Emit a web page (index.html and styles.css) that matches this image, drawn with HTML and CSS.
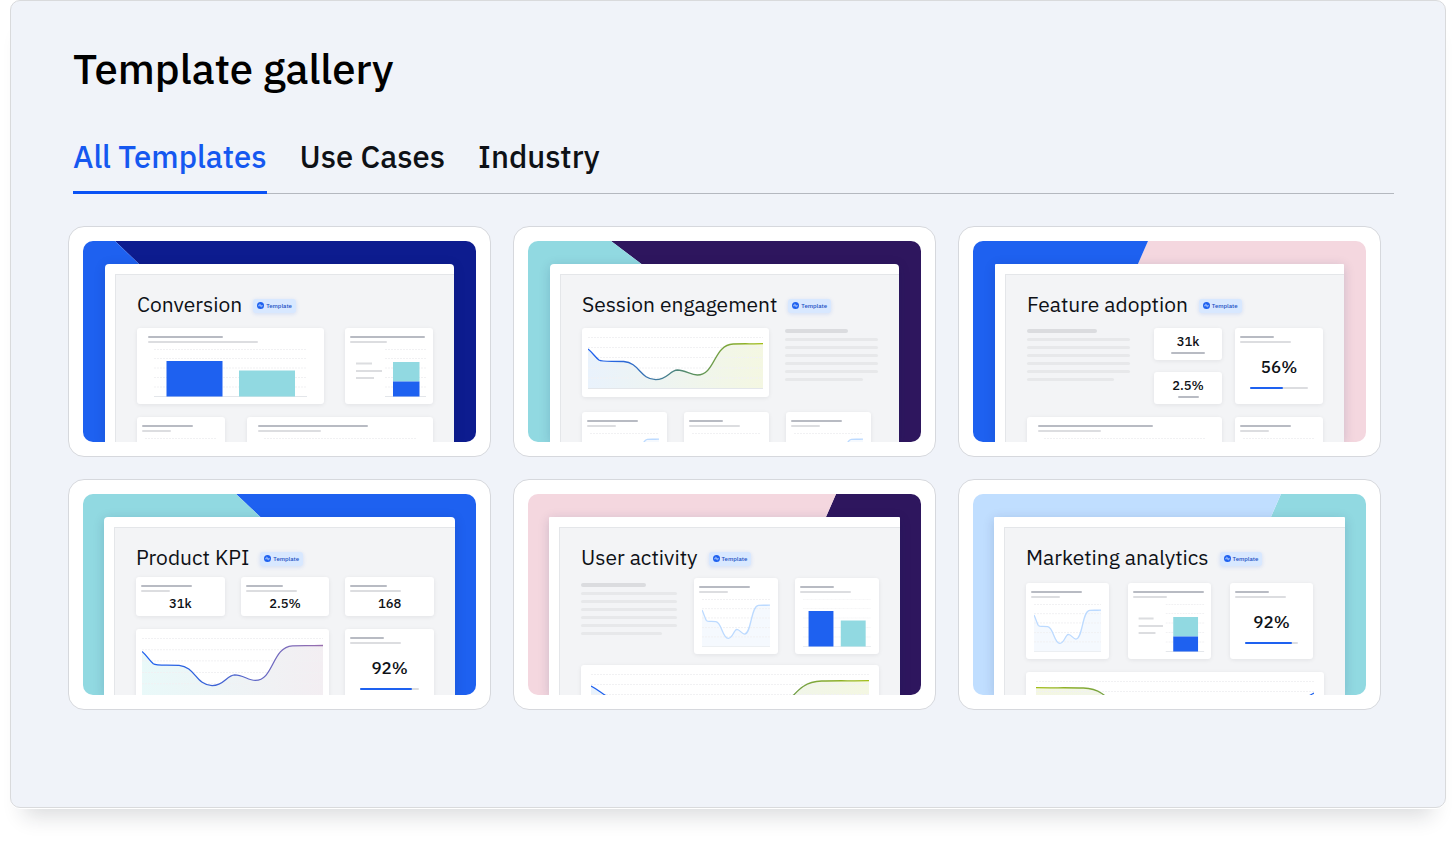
FILE: index.html
```html
<!DOCTYPE html>
<html lang="en">
<head>
  <meta charset="UTF-8">
  <meta name="viewport" content="width=device-width, initial-scale=1.0">
  <title>Template gallery</title>
  <link rel="stylesheet" href="styles.css">
</head>
<body>
  <!-- Shared chart shapes -->
  <svg class="defs" aria-hidden="true">
    <defs>
      <linearGradient id="lime-line">
        <stop offset="0" stop-color="#1e61f0"/>
        <stop offset="0.2" stop-color="#2b67d8"/>
        <stop offset="0.6" stop-color="#5a9060"/>
        <stop offset="1" stop-color="#a2bd14"/>
      </linearGradient>
      <linearGradient id="lime-fill">
        <stop offset="0" stop-color="#e9f2fc"/>
        <stop offset="1" stop-color="#f4f7e2"/>
      </linearGradient>
      <linearGradient id="plum-line">
        <stop offset="0" stop-color="#1e61f0"/>
        <stop offset="0.3" stop-color="#2f62dc"/>
        <stop offset="1" stop-color="#9a6fae"/>
      </linearGradient>
      <linearGradient id="plum-fill">
        <stop offset="0" stop-color="#e9f9f9"/>
        <stop offset="1" stop-color="#f3eef2"/>
      </linearGradient>
      <path id="grid-wide" d="M0 .5H176M0 10.5H176M0 20.5H176M0 31H176M0 41H176"/>
      <path id="curve" d="M0 12C5 16 7 20 11 23C14 25 22 24 36 24.5C52 26 52 42 68 42.7C80 42.5 82 33.5 90 33C98 33 103 38 110 38C128 38 126 8 146 7C156 6.5 165 7 176 6.7"/>
      <path id="area" d="M0 12C5 16 7 20 11 23C14 25 22 24 36 24.5C52 26 52 42 68 42.7C80 42.5 82 33.5 90 33C98 33 103 38 110 38C128 38 126 8 146 7C156 6.5 165 7 176 6.7V51.5H0Z"/>
      <symbol id="mark" viewBox="0 0 14 14">
        <circle cx="7" cy="7" r="7" fill="#1e61f0"/>
        <path d="M3 7.500H11M4 7.500C5 2.500 6.300 2.500 7.200 7S9 11.300 9.800 7.500" fill="none" stroke="#d8e8ff" stroke-width="1" stroke-linecap="round"/>
      </symbol>
      <symbol id="bars" viewBox="0 0 153 48" preserveAspectRatio="none">
        <path class="grid" d="M0 .5H153M0 9.500H153M0 19H153M0 28.500H153M0 38H153"/>
        <path class="base" d="M0 47.500H153"/>
        <rect x="12.500" y="12" width="56" height="35.500" fill="#1e61f0"/>
        <rect x="85" y="21.500" width="56" height="26" fill="#91d9e1"/>
      </symbol>
      <symbol id="stack" viewBox="0 0 78 48" preserveAspectRatio="none">
        <path class="grid" d="M35 .5H76M35 9.500H76M35 19H76M35 28.500H76M35 38H76"/>
        <path class="base" d="M35 47.500H76"/>
        <path d="M6 14.500h16M6 22h26M6 29h18" fill="none" stroke="#dcdde0" stroke-width="2"/>
        <rect x="43" y="13" width="26.500" height="19.500" fill="#91d9e1"/>
        <rect x="43" y="32.500" width="26.500" height="15" fill="#1e61f0"/>
      </symbol>
      <symbol id="spark" viewBox="0 0 176 52" preserveAspectRatio="none">
        <use href="#area" fill="#f5f9fe"/>
        <use href="#grid-wide" class="grid"/>
        <path class="base" d="M0 51.500H176"/>
        <use href="#curve" class="curve" stroke="#bcdaff"/>
      </symbol>
      <symbol id="empty" viewBox="0 0 176 52" preserveAspectRatio="none">
        <use href="#grid-wide" class="grid"/>
      </symbol>
    </defs>
  </svg>

  <main class="shell">
    <h1>Template gallery</h1>

    <nav class="tabs">
      <a class="tab active" href="#all">All Templates</a>
      <a class="tab" href="#use-cases">Use Cases</a>
      <a class="tab" href="#industry">Industry</a>
    </nav>

    <section class="gallery">
      <!-- Conversion -->
      <a class="card" href="#conversion">
        <div class="preview conversion">
          <div class="frame">
            <div class="panel">
              <div class="head">
                <h2>Conversion</h2>
                <span class="badge"><svg><use href="#mark"/></svg>Template</span>
              </div>
              <div class="row wide-narrow">
                <div class="widget roomy">
                  <span class="line w75"></span><span class="line light w110"></span>
                  <svg class="chart"><use href="#bars"/></svg>
                </div>
                <div class="widget">
                  <span class="line w75"></span><span class="line light w37"></span>
                  <svg class="chart flush"><use href="#stack"/></svg>
                </div>
              </div>
              <div class="row narrow-wide">
                <div class="widget">
                  <span class="line w51"></span><span class="line light w29"></span>
                  <svg class="chart"><use href="#empty"/></svg>
                </div>
                <div class="widget roomy">
                  <span class="line w110"></span><span class="line light w63"></span>
                  <svg class="chart"><use href="#empty"/></svg>
                </div>
              </div>
            </div>
          </div>
        </div>
      </a>

      <!-- Session engagement -->
      <a class="card" href="#session-engagement">
        <div class="preview session">
          <div class="frame">
            <div class="panel">
              <div class="head">
                <h2>Session engagement</h2>
                <span class="badge"><svg><use href="#mark"/></svg>Template</span>
              </div>
              <div class="row plot-text">
                <div class="widget plot">
                  <svg class="trend" viewBox="0 0 176 52" preserveAspectRatio="none">
                    <use href="#area" fill="url(#lime-fill)"/>
                    <use href="#grid-wide" class="grid"/>
                    <path class="base" d="M0 51.500H176"/>
                    <use href="#curve" class="curve" stroke="url(#lime-line)"/>
                  </svg>
                </div>
                <div class="text">
                  <span></span><span></span><span></span><span></span><span></span><span></span><span></span>
                </div>
              </div>
              <div class="row three-85">
                <div class="widget">
                  <span class="line w51"></span><span class="line light w29"></span>
                  <svg class="chart"><use href="#spark"/></svg>
                </div>
                <div class="widget">
                  <span class="line w34"></span><span class="line light w51"></span>
                  <svg class="chart"><use href="#empty"/></svg>
                </div>
                <div class="widget">
                  <span class="line w51"></span><span class="line light w29"></span>
                  <svg class="chart"><use href="#spark"/></svg>
                </div>
              </div>
            </div>
          </div>
        </div>
      </a>

      <!-- Feature adoption -->
      <a class="card" href="#feature-adoption">
        <div class="preview feature">
          <div class="frame">
            <div class="panel">
              <div class="head">
                <h2>Feature adoption</h2>
                <span class="badge"><svg><use href="#mark"/></svg>Template</span>
              </div>
              <div class="row text-stats">
                <div class="text">
                  <span></span><span></span><span></span><span></span><span></span><span></span><span></span>
                </div>
                <div class="stats">
                  <div class="widget stat">
                    <strong>31k</strong><span class="line w34"></span>
                  </div>
                  <div class="widget stat">
                    <strong>2.5%</strong><span class="line w21"></span>
                  </div>
                </div>
                <div class="widget">
                  <span class="line w34"></span><span class="line light w51"></span>
                  <strong class="big">56%</strong>
                  <progress value="57" max="100" aria-label="Adoption"></progress>
                </div>
              </div>
              <div class="row adoption-more">
                <div class="widget roomy">
                  <span class="line w115"></span><span class="line light w63"></span>
                  <svg class="chart"><use href="#empty"/></svg>
                </div>
                <div class="widget">
                  <span class="line w51"></span><span class="line light w29"></span>
                  <svg class="chart"><use href="#empty"/></svg>
                </div>
              </div>
            </div>
          </div>
        </div>
      </a>

      <!-- Product KPI -->
      <a class="card" href="#product-kpi">
        <div class="preview kpi">
          <div class="frame">
            <div class="panel">
              <div class="head">
                <h2>Product KPI</h2>
                <span class="badge"><svg><use href="#mark"/></svg>Template</span>
              </div>
              <div class="row kpis">
                <div class="widget short">
                  <span class="line w51"></span><span class="line light w29"></span>
                  <strong>31k</strong>
                </div>
                <div class="widget short">
                  <span class="line w37"></span><span class="line light w51"></span>
                  <strong>2.5%</strong>
                </div>
                <div class="widget short">
                  <span class="line w37"></span><span class="line light w51"></span>
                  <strong>168</strong>
                </div>
              </div>
              <div class="row kpis">
                <div class="widget plot span-two">
                  <svg class="trend tall" viewBox="0 0 176 52" preserveAspectRatio="none">
                    <use href="#area" fill="url(#plum-fill)"/>
                    <use href="#grid-wide" class="grid"/>
                    <use href="#curve" class="curve" stroke="url(#plum-line)"/>
                  </svg>
                </div>
                <div class="widget">
                  <span class="line w34"></span><span class="line light w51"></span>
                  <strong class="big">92%</strong>
                  <progress value="88" max="100" aria-label="KPI progress"></progress>
                </div>
              </div>
            </div>
          </div>
        </div>
      </a>

      <!-- User activity -->
      <a class="card" href="#user-activity">
        <div class="preview activity">
          <div class="frame">
            <div class="panel">
              <div class="head">
                <h2>User activity</h2>
                <span class="badge"><svg><use href="#mark"/></svg>Template</span>
              </div>
              <div class="row text-charts">
                <div class="text">
                  <span></span><span></span><span></span><span></span><span></span><span></span><span></span>
                </div>
                <div class="widget">
                  <span class="line w51"></span><span class="line light w29"></span>
                  <svg class="chart"><use href="#spark"/></svg>
                </div>
                <div class="widget">
                  <span class="line w34"></span><span class="line light w51"></span>
                  <svg class="chart"><use href="#bars"/></svg>
                </div>
              </div>
              <div class="row">
                <div class="widget plot roomy">
                  <svg class="trend" viewBox="0 0 176 52" preserveAspectRatio="none">
                    <use href="#area" fill="url(#lime-fill)"/>
                    <use href="#grid-wide" class="grid"/>
                    <use href="#curve" class="curve" stroke="url(#lime-line)"/>
                  </svg>
                </div>
              </div>
            </div>
          </div>
        </div>
      </a>

      <!-- Marketing analytics -->
      <a class="card" href="#marketing-analytics">
        <div class="preview marketing">
          <div class="frame">
            <div class="panel">
              <div class="head">
                <h2>Marketing analytics</h2>
                <span class="badge"><svg><use href="#mark"/></svg>Template</span>
              </div>
              <div class="row three-83">
                <div class="widget">
                  <span class="line w51"></span><span class="line light w29"></span>
                  <svg class="chart"><use href="#spark"/></svg>
                </div>
                <div class="widget">
                  <span class="line w71"></span><span class="line light w34"></span>
                  <svg class="chart flush"><use href="#stack"/></svg>
                </div>
                <div class="widget">
                  <span class="line w34"></span><span class="line light w51"></span>
                  <strong class="big">92%</strong>
                  <progress value="88" max="100" aria-label="Campaign progress"></progress>
                </div>
              </div>
              <div class="row">
                <div class="widget plot roomy">
                  <svg class="trend mirrored" viewBox="0 0 176 52" preserveAspectRatio="none">
                    <use href="#area" fill="url(#lime-fill)"/>
                    <use href="#grid-wide" class="grid"/>
                    <use href="#curve" class="curve" stroke="url(#lime-line)"/>
                  </svg>
                </div>
              </div>
            </div>
          </div>
        </div>
      </a>
    </section>
  </main>
</body>
</html>
```
FILE: styles.css
```css
/* General Styling */
* {
  box-sizing: border-box;
}

body {
  margin: 0;
  padding: 0 10px 40px;
  background: #fff;
  color: #0e1116;
  font-family: "IBM Plex Sans", Roboto, "Noto Sans", sans-serif;
}

a {
  color: inherit;
  text-decoration: none;
}

.defs {
  display: block;
  width: 0;
  height: 0;
}

.shell {
  padding: 43px 51px 97px 57px;
  background: #f0f3f9;
  border: 1px solid #d9dadc;
  border-radius: 10px;
  box-shadow: 0 1px 0 #fff, 0 22px 20px -14px rgba(25, 30, 45, 0.16);
}

h1 {
  margin: 0 0 45px 5px;
  color: #000;
  font-size: 42px;
  font-weight: 500;
  line-height: 50px;
}

/* Tabs */
.tabs {
  display: flex;
  gap: 33px;
  margin: 0 0 32px 5px;
  border-bottom: 1px solid #b4b8bf;
}

.tab {
  margin-bottom: -1px;
  padding-bottom: 16px;
  border-bottom: 3px solid transparent;
  font-size: 31px;
  font-weight: 500;
  line-height: 36px;
}

.tab.active {
  color: #1558f0;
  border-color: #0a52f5;
}

/* Gallery */
.gallery {
  display: grid;
  grid-template-columns: repeat(3, minmax(0, 1fr));
  gap: 22px;
  margin-right: 13px;
}

.card {
  padding: 14px;
  background: #fff;
  border: 1px solid #d6d8dd;
  border-radius: 16px;
}

.preview {
  position: relative;
  isolation: isolate;
  display: flex;
  flex-direction: column;
  aspect-ratio: 393 / 201;
  overflow: hidden;
  padding: 23px 22px 0;
  border-radius: 10px;
}

/* Two colours with a slanted edge behind the frame */
.preview::before,
.preview::after {
  content: "";
  position: absolute;
  inset: 0;
  z-index: -1;
  background: var(--left);
  clip-path: polygon(0 0, var(--top) 0, var(--bottom) 100%, 0 100%);
}

.preview::before {
  z-index: -2;
  background: var(--right);
  clip-path: polygon(var(--top) 0, 100% 0, 100% 100%, var(--bottom) 100%);
}

.conversion {
  --left: #1e61f0;
  --right: #0d1c8f;
  --top: 32px;
  --bottom: 242px;
}

.session {
  --left: #91d9e1;
  --right: #2e165e;
  --top: 83px;
  --bottom: 349px;
}

.feature {
  --left: #1e61f0;
  --right: #f4d7df;
  --top: 175px;
  --bottom: 87px;
}

.kpi {
  --left: #91d9e1;
  --right: #1e61f0;
  --top: 153px;
  --bottom: 366px;
}

.activity {
  --left: #f4d7df;
  --right: #2e165e;
  --top: 308px;
  --bottom: 220px;
}

.marketing {
  --left: #c0deff;
  --right: #91d9e1;
  --top: 308px;
  --bottom: 220px;
}

.kpi,
.activity,
.marketing {
  padding-left: 21px;
  padding-right: 21px;
}

.frame {
  position: relative;
  flex: 1;
  min-height: 0;
  padding: 10px 0 0 10px;
  background: #fff;
  border-radius: 4px 4px 0 0;
  box-shadow: 0 2px 12px rgba(10, 30, 80, 0.16);
}

.feature .frame,
.activity .frame,
.marketing .frame {
  border-radius: 1px 1px 0 0;
}

.panel {
  display: flex;
  flex-direction: column;
  gap: 13px;
  height: 100%;
  padding: 16px 21px 0;
  overflow: hidden;
  background: #f3f4f6;
  border: solid #e4e6e9;
  border-width: 1px 0 0 1px;
}

.session .panel {
  gap: 15px;
}

.activity .panel {
  gap: 11px;
}

.head {
  display: flex;
  align-items: center;
  gap: 11px;
  margin-bottom: -2px;
}

.session .head {
  margin-bottom: -4px;
}

.kpi .head {
  margin-bottom: -6px;
}

.activity .head {
  margin-bottom: -3px;
}

.marketing .head {
  margin-bottom: 0;
}

h2 {
  margin: 0;
  font-size: 21px;
  font-weight: 450;
  line-height: 26px;
}

.badge {
  display: flex;
  align-items: center;
  gap: 2px;
  height: 14px;
  margin-top: 3px;
  padding: 0 4px;
  background: #d8e8ff;
  border-radius: 3px;
  box-shadow: 0 1px 4px rgba(30, 97, 240, 0.15);
  color: #1a4fc4;
  font-size: 6px;
  font-weight: 500;
}

.badge svg {
  width: 7px;
  height: 7px;
}

/* Widgets */
.row {
  display: grid;
  flex-shrink: 0;
  grid-template-columns: minmax(0, 1fr);
}

.wide-narrow {
  grid-template-columns: minmax(0, 1fr) 88px;
  gap: 21px;
}

.narrow-wide {
  grid-template-columns: 88px minmax(0, 1fr);
  gap: 22px;
}

.plot-text {
  grid-template-columns: minmax(0, 1fr) 93px;
  gap: 16px;
}

.three-85 {
  grid-template-columns: repeat(3, 85px);
  gap: 17px;
}

.text-stats {
  grid-template-columns: minmax(0, 1fr) 68px 88px;
  gap: 13px;
}

.text-stats .text {
  margin-right: 11px;
}

.adoption-more {
  grid-template-columns: minmax(0, 1fr) 88px;
  gap: 13px;
}

.kpis {
  grid-template-columns: repeat(3, minmax(0, 1fr));
  gap: 16px;
}

.span-two {
  grid-column: span 2;
}

.text-charts {
  grid-template-columns: minmax(0, 1fr) 84px 84px;
  gap: 17px;
}

.text-charts .text {
  padding-top: 5px;
}

.three-83 {
  grid-template-columns: repeat(3, 83px);
  gap: 19px;
}

.widget {
  display: flex;
  flex-direction: column;
  padding: 8px 5px 7px;
  background: #fff;
  border-radius: 3px;
  box-shadow: 0 1px 4px rgba(20, 25, 40, 0.08);
}

.widget.roomy {
  padding-left: 11px;
  padding-right: 11px;
}

.widget.plot {
  padding: 9px 6px 8px;
}

.widget.plot.roomy {
  padding-left: 10px;
  padding-right: 10px;
}

.widget.short {
  padding-bottom: 4px;
}

.line {
  height: 2px;
  background: #b8bbc3;
  border-radius: 1px;
}

.line.light {
  margin-top: 3px;
  background: #dcdde0;
}

.w21 { width: 21px; }
.w29 { width: 29px; }
.w34 { width: 34px; }
.w37 { width: 37px; }
.w51 { width: 51px; }
.w63 { width: 63px; }
.w71 { width: 71px; }
.w75 { width: 75px; }
.w110 { width: 110px; }
.w115 { width: 115px; }

.stats {
  display: flex;
  flex-direction: column;
  gap: 12px;
}

.widget.stat {
  align-items: center;
  gap: 2px;
  padding: 6px 5px;
}

strong {
  font-size: 13px;
  font-weight: 500;
  line-height: 16px;
  text-align: center;
}

.short strong {
  margin-top: 4px;
}

strong.big {
  margin-top: 13px;
  font-size: 17px;
  line-height: 22px;
}

progress {
  appearance: none;
  display: block;
  width: auto;
  height: 2px;
  margin: 9px 10px 0;
  border: 0;
}

progress::-webkit-progress-bar {
  background: #dcdde0;
  border-radius: 1px;
}

progress::-webkit-progress-value {
  background: #1e61f0;
  border-radius: 1px;
}

.text {
  display: flex;
  flex-direction: column;
  gap: 5px;
  padding-top: 1px;
}

.text span {
  height: 3px;
  background: #e7e8ea;
  border-radius: 2px;
}

.text span:first-child {
  width: 68%;
  height: 4px;
  background: #dbdcdf;
}

.text span:last-child {
  width: 84%;
}

/* Charts */
.chart {
  width: auto;
  height: 48px;
  margin: 6px 3px 0;
}

.roomy .chart {
  margin-left: 6px;
  margin-right: 6px;
}

.chart.flush {
  margin-left: 0;
  margin-right: 0;
}

.trend {
  width: 100%;
  height: 52px;
}

.trend.tall {
  height: 58px;
}

.trend.mirrored {
  transform: scaleX(-1);
}

.grid {
  fill: none;
  stroke: #f1f1f3;
  stroke-width: 1px;
  stroke-dasharray: 2 1;
}

.base {
  fill: none;
  stroke: #e3e6ea;
  stroke-width: 1px;
}

.curve {
  fill: none;
  stroke-width: 1.3px;
}

#curve,
#grid-wide {
  vector-effect: non-scaling-stroke;
}
```
